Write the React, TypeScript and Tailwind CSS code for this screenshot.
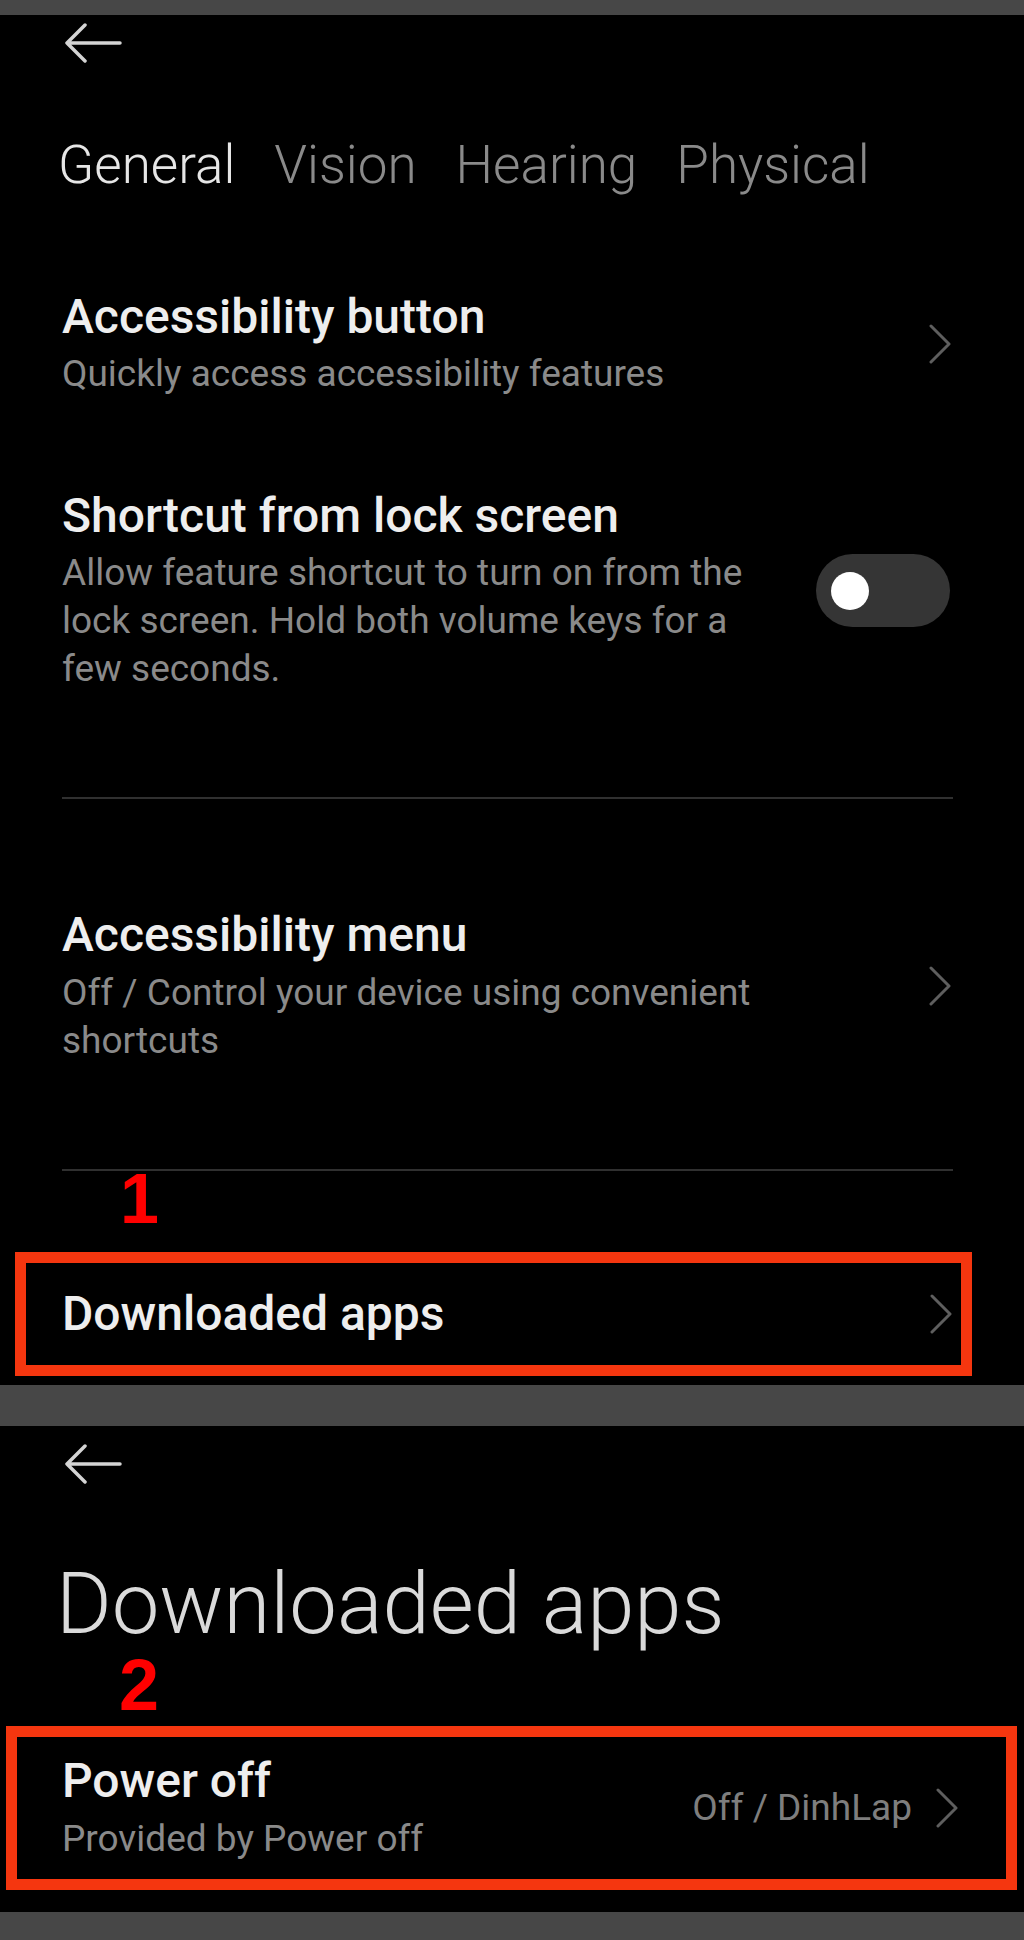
import React from "react";

const Back = () => (
  <svg width="58" height="40" viewBox="0 0 58 40" fill="none" stroke="#d4d4d4" strokeWidth="3.5" strokeLinecap="round" strokeLinejoin="round">
    <path d="M3 20 H56 M3 20 L21 2 M3 20 L21 38" />
  </svg>
);

const Chevron = ({ color = "#5e5e5e" }: { color?: string }) => (
  <svg width="22" height="40" viewBox="0 0 22 40" fill="none" stroke={color} strokeWidth="3" strokeLinecap="round" strokeLinejoin="round">
    <path d="M2 2 L20 20 L2 38" />
  </svg>
);

const font = { fontFamily: "Roboto, 'Noto Sans', sans-serif" };
const markFont = { fontFamily: "'Liberation Sans', Arial, sans-serif" };

export default function App() {
  return (
    <div className="w-[1024px] h-[1940px] bg-black flex flex-col" style={font}>
      <div className="h-[15px] bg-[#474747] shrink-0" />
      {/* Screen 1 */}
      <div className="h-[1370px] shrink-0 flex flex-col overflow-hidden">
        <div className="pt-[8px] pl-[64px] h-[48px] shrink-0">
          <Back />
        </div>
        <div className="mt-[71px] pl-[58px] flex gap-[39px] text-[53px] leading-[62px] font-light shrink-0">
          <span className="text-[#e6e6e6]">General</span>
          <span className="text-[#8a8a8a]">Vision</span>
          <span className="text-[#8a8a8a]">Hearing</span>
          <span className="text-[#8a8a8a]">Physical</span>
        </div>
        <div className="mt-[93px] pl-[62px] pr-[73px] flex items-center justify-between shrink-0">
          <div className="flex flex-col">
            <div className="text-[48px] leading-[56px] font-medium text-[#eeeeee]">Accessibility button</div>
            <div className="mt-[5px] text-[37px] leading-[48px] text-[#8a8a8a]">Quickly access accessibility features</div>
          </div>
          <Chevron />
        </div>
        <div className="mt-[90px] pl-[62px] pr-[74px] flex items-center justify-between shrink-0">
          <div className="flex flex-col">
            <div className="text-[48px] leading-[56px] font-medium text-[#eeeeee]">Shortcut from lock screen</div>
            <div className="mt-[5px] text-[37px] leading-[48px] text-[#8a8a8a]">
              Allow feature shortcut to turn on from the
              <br />
              lock screen. Hold both volume keys for a
              <br />
              few seconds.
            </div>
          </div>
          <div className="w-[134px] h-[73px] rounded-full bg-[#353535] flex items-center pl-[15px] shrink-0">
            <div className="w-[38px] h-[38px] rounded-full bg-white" />
          </div>
        </div>
        <div className="mt-[104px] mx-[62px] w-[891px] h-[2px] bg-[#303030] shrink-0" />
        <div className="mt-[108px] pl-[62px] pr-[73px] flex items-center justify-between shrink-0">
          <div className="flex flex-col">
            <div className="text-[48px] leading-[56px] font-medium text-[#eeeeee]">Accessibility menu</div>
            <div className="mt-[6px] text-[37px] leading-[48px] text-[#8a8a8a]">
              Off / Control your device using convenient
              <br />
              shortcuts
            </div>
          </div>
          <Chevron />
        </div>
        <div className="mt-[104px] mx-[62px] w-[891px] h-[2px] bg-[#303030] shrink-0" />
        <div className="pl-[120px] h-[56px] text-[70px] leading-[56px] font-bold text-[#ff0000] shrink-0" style={markFont}>1</div>
        <div className="mt-[25px] ml-[15px] w-[957px] h-[124px] border-[11px] border-[#f5360f] flex items-center justify-between pl-[36px] pr-[9px] shrink-0">
          <div className="text-[48px] leading-[56px] font-medium text-[#eeeeee]">Downloaded apps</div>
          <Chevron />
        </div>
      </div>
      <div className="h-[41px] bg-[#474747] shrink-0" />
      {/* Screen 2 */}
      <div className="h-[486px] shrink-0 flex flex-col overflow-hidden">
        <div className="pt-[18px] pl-[64px] h-[58px] shrink-0">
          <Back />
        </div>
        <div className="mt-[75px] pl-[56px] text-[85px] leading-[90px] font-light text-[#dadada] shrink-0">Downloaded apps</div>
        <div className="mt-[8px] pl-[119px] h-[56px] text-[72px] leading-[56px] font-bold text-[#ff0000] shrink-0" style={markFont}>2</div>
        <div className="mt-[13px] ml-[6px] w-[1011px] h-[164px] border-[11px] border-[#f5360f] flex items-center justify-between pl-[45px] pr-[48px] shrink-0">
          <div className="flex flex-col">
            <div className="text-[48px] leading-[56px] font-medium text-[#eeeeee]">Power off</div>
            <div className="mt-[6px] text-[37px] leading-[48px] text-[#8a8a8a]">Provided by Power off</div>
          </div>
          <div className="flex items-center gap-[24px]">
            <span className="text-[37px] leading-[48px] text-[#7e7e7e]">Off / DinhLap</span>
            <Chevron />
          </div>
        </div>
      </div>
      <div className="h-[28px] bg-[#474747] shrink-0" />
    </div>
  );
}
